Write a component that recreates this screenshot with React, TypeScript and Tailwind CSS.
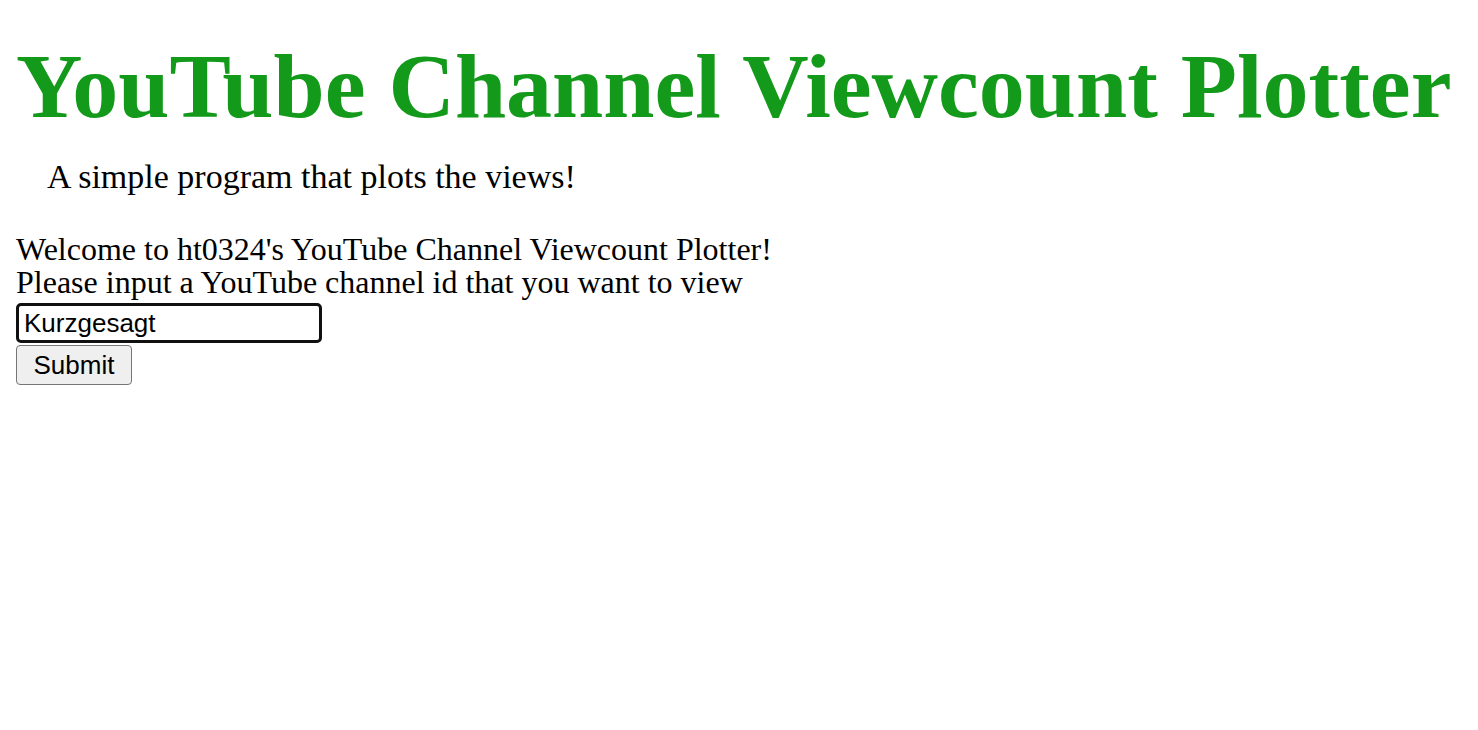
export default function App() {
  return (
    <div className="min-h-screen bg-white px-4 text-black font-['Liberation_Serif','Times_New_Roman',serif]">
      {/* Header */}
      <h1 className="pt-[35px] text-[92px] leading-[102px] font-bold text-[#139a1a] whitespace-nowrap">
        YouTube Channel Viewcount Plotter
      </h1>
      <p className="mt-[21px] pl-[31px] text-[34px] leading-[37px]">A simple program that plots the views!</p>

      {/* Form */}
      <div className="mt-[38px] text-[32px] leading-[33px]">
        <div>Welcome to ht0324's YouTube Channel Viewcount Plotter!</div>
        <div>Please input a YouTube channel id that you want to view</div>
      </div>
      <form
        className="mt-[4px] flex flex-col items-start font-['Liberation_Sans',Arial,sans-serif]"
        onSubmit={e => e.preventDefault()}
      >
        <input
          type="text"
          defaultValue="Kurzgesagt"
          className="w-[306px] h-[40px] border-[3px] border-[#101010] rounded-[5px] px-[5px] text-[26px] outline-none"
        />
        <button
          type="submit"
          className="mt-[2px] w-[116px] h-[40px] bg-[#efefef] border border-[#767676] rounded-[4px] text-[26px]"
        >
          Submit
        </button>
      </form>
    </div>
  );
}
